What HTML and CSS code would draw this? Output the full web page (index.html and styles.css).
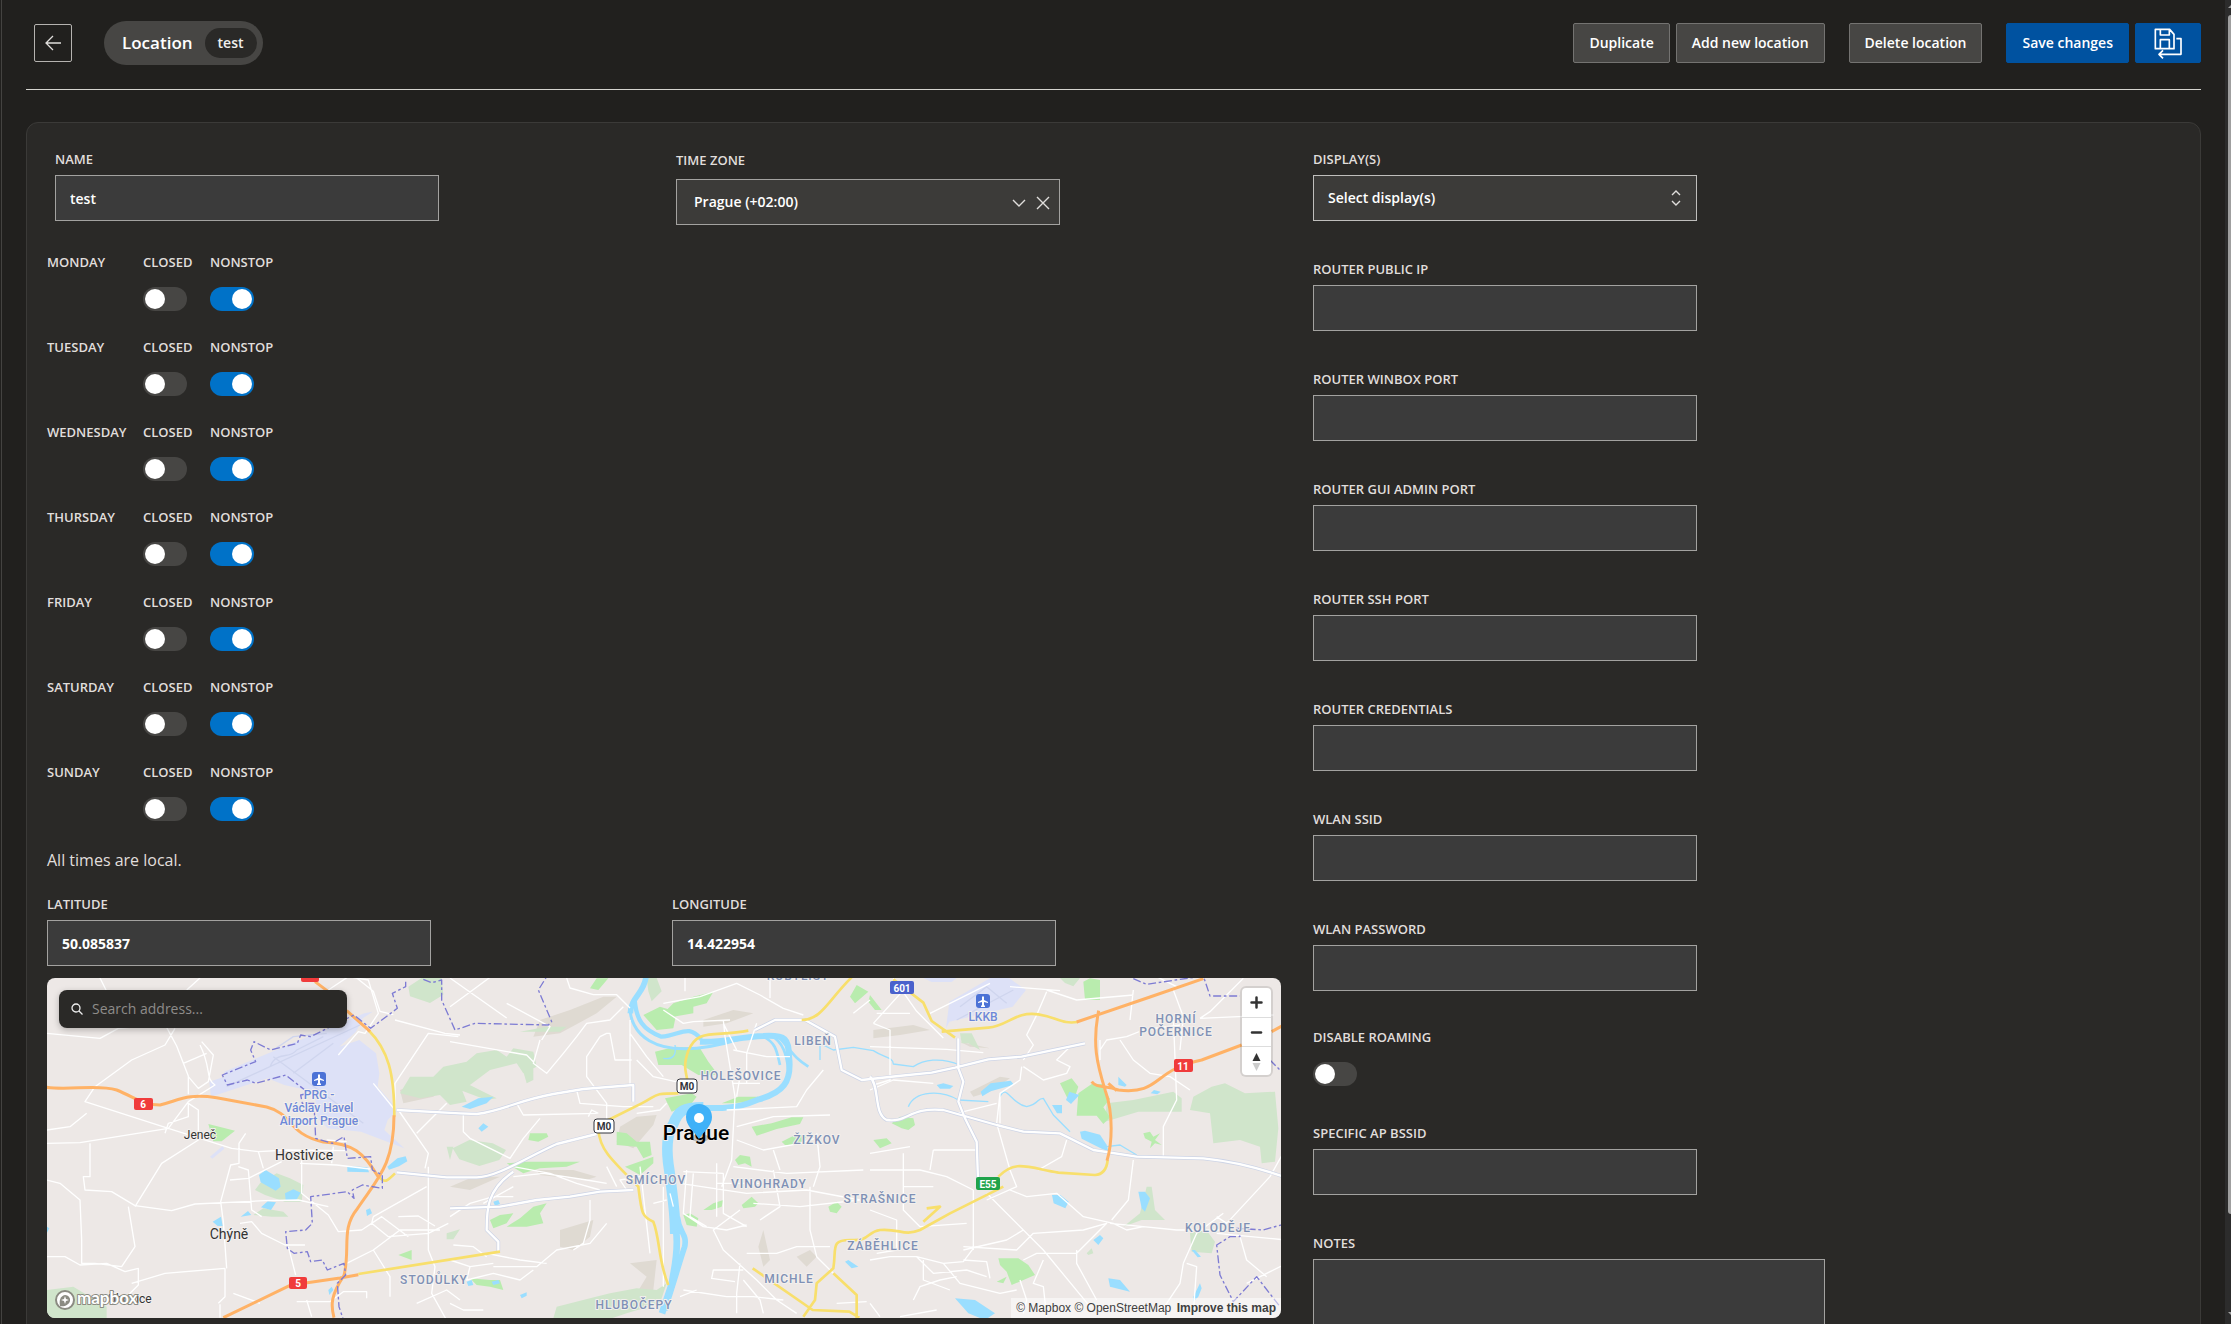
FILE: index.html
```html
<!DOCTYPE html>
<html lang="en">
<head>
<meta charset="utf-8">
<meta name="viewport" content="width=device-width, initial-scale=1">
<title>Location – test</title>
<link rel="stylesheet" href="styles.css">
</head>
<body>
<div class="shell">
<main class="main">
  <header class="header">
    <button class="back" type="button" aria-label="Back">
      <svg width="16" height="16" viewBox="0 0 16 16"><path d="M16 8H1M8 1L1 8l7 7" fill="none" stroke="currentColor" stroke-width="1.3"/></svg>
    </button>
    <h1 class="title">Location <span class="title-tag">test</span></h1>
    <div class="actions">
      <button class="btn" type="button">Duplicate</button>
      <button class="btn" type="button">Add new location</button>
      <button class="btn btn-spaced" type="button">Delete location</button>
      <button class="btn btn-primary btn-spaced" type="button">Save changes</button>
      <button class="btn btn-primary btn-icon" type="button" aria-label="Save and return">
        <svg width="28" height="31" viewBox="130 83 84 93" fill="none" stroke="currentColor" stroke-width="5" stroke-linejoin="round"><path d="M134 87H177L190 102V145H134ZM149 87V104H176V87M149 145V118H176V145M197 115H211V162H146M157 150L145 162L157 174"/></svg>
      </button>
    </div>
  </header>

  <form class="card">
    <div class="left">
      <div class="pair pair-inset">
        <div class="field">
          <label for="name">Name</label>
          <input class="control" id="name" type="text" value="test">
        </div>
        <div class="field field-zone">
          <label for="zone">Time zone</label>
          <div class="select-box">
            <select class="control" id="zone"><option>Prague (+02:00)</option></select>
            <svg class="zone-caret" width="14" height="8" viewBox="0 0 14 8"><path d="M1 1l6 6 6-6" fill="none" stroke="currentColor" stroke-width="1.4"/></svg>
            <button class="clear" type="button" aria-label="Clear time zone"><svg width="14" height="14" viewBox="0 0 14 14"><path d="M1 1l12 12M13 1L1 13" fill="none" stroke="currentColor" stroke-width="1.4"/></svg></button>
          </div>
        </div>
      </div>

      <div class="days">
        <div class="day"><span class="day-name">Monday</span><label>Closed<input class="toggle" type="checkbox"></label><label>Nonstop<input class="toggle" type="checkbox" checked></label></div>
        <div class="day"><span class="day-name">Tuesday</span><label>Closed<input class="toggle" type="checkbox"></label><label>Nonstop<input class="toggle" type="checkbox" checked></label></div>
        <div class="day"><span class="day-name">Wednesday</span><label>Closed<input class="toggle" type="checkbox"></label><label>Nonstop<input class="toggle" type="checkbox" checked></label></div>
        <div class="day"><span class="day-name">Thursday</span><label>Closed<input class="toggle" type="checkbox"></label><label>Nonstop<input class="toggle" type="checkbox" checked></label></div>
        <div class="day"><span class="day-name">Friday</span><label>Closed<input class="toggle" type="checkbox"></label><label>Nonstop<input class="toggle" type="checkbox" checked></label></div>
        <div class="day"><span class="day-name">Saturday</span><label>Closed<input class="toggle" type="checkbox"></label><label>Nonstop<input class="toggle" type="checkbox" checked></label></div>
        <div class="day"><span class="day-name">Sunday</span><label>Closed<input class="toggle" type="checkbox"></label><label>Nonstop<input class="toggle" type="checkbox" checked></label></div>
      </div>
      <p class="hint">All times are local.</p>

      <div class="pair">
        <div class="field">
          <label for="lat">Latitude</label>
          <input class="control coord" id="lat" type="text" value="50.085837">
        </div>
        <div class="field">
          <label for="lng">Longitude</label>
          <input class="control coord" id="lng" type="text" value="14.422954">
        </div>
      </div>

      <div class="map">
        <svg class="map-canvas" viewBox="0 0 1234 340" preserveAspectRatio="xMidYMid slice" role="img" aria-label="Map of Prague">
          <rect width="1234" height="340" fill="#ede8e6"/>
          <g transform="translate(-7 -8) scale(.333333)" fill="none" stroke-linejoin="round">
            <!-- hills -->
            <g fill="#dfdad2">
              <path d="M1230 300l60-25 80-20-10 30-130 50zM1500 150l90-30 100-40 40 0-60 50-110 60-80 10zM1740 470l50-30 60-5-10 30-60 70-50-20zM1490 600l110 0 70 20-30 10-140-15zM1560 780l100-30-10 50-50 40-40-10zM1770 880l80-10-10 90-50 10 30-50zM2170 780l20 90-20 20-15-60zM1990 150l90-30 60 10-80 30-70 10zM2500 180l120-15 50 15-90 15-80 10zM2790 365l90-45 30 5-60 40-50 15zM2760 215l90 20-60-5zM1080 360l130-50 50 0-80 70-90 20zM1230 650l70-30 80 0-90 40zM2270 860l40-20 20 20-30 30z"/>
            </g>
            <!-- woods -->
            <g fill="#d0e5cb">
              <path d="M1105 50l40-26 60 0 5 50-40 25-60-20zM1080 370l30-50 70 0 30-30 70-15 40 30-60 40 20 50-50 10-30-30-60 10zM1310 250l60-10 30 20 20-25 60 10 10 45-40 20-20-30-80 20-80 60-60-10 40-50zM1440 185l80-15 60 0-20 15zM1440 270l40 0 0 60-20 10zM1238 535l50-25 70 10 40 20-20 30-60 18-60-20zM1270 335l60 30 40 20-30 5-80-30zM1820 24l30 0 15 40-30 30-10-30zM660 640l50-30 40 15 40 20-5 50-50 0-60-20-30-15zM640 735l30-20 60 10 15 15-50 0zM20 960l80-10 100 60 0 40-180 0zM1550 1010l100-25 60-15 80-15 60 5 30-20-20 60-100 30-90 30-130-15zM1220 530l20 0-10 40zM1220 790l40-12-20 30-20 0zM3200 400l80-10 120-25 25 20 0 40-130 0-50 15-50 15zM3460 380l55-30 40-10 60 30 90-5 10 110-10 100-40 5-5-50-60-20-80 10-10-90-60-10zM3450 790l45-15 30 40-10 35-60-5zM3320 650l15 0 10 70 30 30-70 0-55 20 50-40zM2760 190l35 0 25 50-35-20-20 0zM3060 24l60 0-20 25-25-10zM3140 850l15-15 5 15-15 5z"/>
            </g>
            <!-- parks -->
            <g fill="#b9ecae">
              <path d="M505 462l80 20-40 32-25 0zM1075 855l40-15 0 30zM1650 55l20-30 35 0-30 35zM1810 135l50-25 50 15-10 50-50 5zM1900 100l60-20 60-15-20 35-40 10 0 20-60 10-20-20zM1845 245l60-15 75 5 25 40 30 40-60 0-50-30-70 0zM1875 385l80-15 15 10-15 20-60 25zM1730 485l30 5 30 25 40 0 5 40-25 10-20-35-60-5zM1755 590l85-30 0 20-40 35zM1470 490l50 0 5 10-30 15-30-5zM1400 580l60-5 160 0-40 15-80 5-50 15zM1350 750l30-15 40-5-20 30-40 15zM1440 745l40-35 40-10-20 30 10 30-50 10-60 0zM2135 470l60-10 60-18 35 0-10 20-70 15-60 20zM2225 515l40-20 40 0-30 30-40 0zM2085 570l15-15 30 5 5 30-20-10-20 5zM1990 720l30-20 30-10-5 20-30 10zM2105 705l30-25 20 20-10 10-35 5zM1930 735l20-5 25 15-5 25-30-5zM2365 710l25-15 15 15-15 20-20-5zM1290 925l60 5 30 0 10 30-40-10-40-5zM2045 400l50-20 60 0-20 15-60 5zM2430 80l20-35 35 20-40 35zM2490 75l35 45-20 0-20-25zM2555 460l25-20 40 5 5 20-20 15-20-5zM2500 510l40-5 15 15-35 15zM3060 340l35-15 20 25-10 30-20 10zM3115 370l40-28 30 0 25 45-20 25 20 30-20 20-20-25-60 0zM3130 35l20-10 30 5 0 60-45 0zM2875 865l60 0 30 20 20 30-70 30-15-40-20-20zM2870 935l30-15-10 20zM3310 490l20-5 10 15 20-10-15 20 20 15-20-5-15 15 5-20-20-10z"/>
            </g>
            <!-- airports -->
            <g fill="#dde1f7">
              <path d="M508 335l45-15 0-15 240-100 180-75 25-5-30 20-20 40-50 45 60-20 50 40 10 60-5 40 60 70-30 30-10 30 60 55-130-50-100-10-30-30-10-80-90-20-50-20-170 55zM2718 175l10-80 130-75 50 5 50 35-40 50-190 45zM510 560l38-32 5 8-36 30zM2650 24l100 0-15 12-60 0z"/>
            </g>
            <g stroke="#cfd5ee" stroke-width="4"><path d="M560 350L960 165M700 260L970 460M700 240l60-40 100-10M690 290c20-50 60-20 80-50l80-40M760 310l120-90M2750 150l170-90M2760 110l80-60 60 50"/></g>
            <!-- ponds -->
            <g fill="#9adeff">
              <path d="M657 615l20-15 40 25 5 25-15 12-45-25zM735 670l25-12 22 10-15 25-30-2zM663 712l20-18 25 3-15 23zM602 740l22-17 10 12zM518 755l25-15 5 28-15 0zM922 588l60 4 5 15-65-2zM1042 590l30-25 25-6 5 15-25 15-30 10zM978 720l12-5 6 15-15 8zM865 960l10-10 5 10-12 15zM20 770l8 5-8 15zM1265 410l50-25 45-5-20 20-50 17zM1315 475l15-15 15 10-20 15zM1360 695l15-5 5 12-15 5zM1440 975l20-8 0 10-15 8zM1280 935l15-5 5 15-15 3zM1355 935l20-5 5 10-20 5zM2415 875l10-5 30 20-20 5zM2822 365l30-25 60-8 10 12-70 20-25 15zM2690 345l20-5 30 8-10 8-30 0zM3120 485l15-3 45 12 20 30 5 20-20-8-60-30zM3036 405l30 0 0 25-15 0zM3078 390l10-25 30 10-25 27zM3235 320l25 25-5 5-20-5zM3332 370l10-10 20 5-10 8zM3295 665l20 0 15 20-15 40-10-10zM3036 675l25 0 25 20-10 20-35-15zM3160 810l20-15 10 10-15 20zM3205 925l35 5 30 35-60-15zM3460 980l20-40 5 15-10 25-15 15zM3455 840l10 0 18 20-10 2zM2745 985l60 5 60 40-30 20-50-20z"/>
            </g>
            <!-- streams -->
            <g stroke="#9adeff" stroke-width="4">
              <path d="M2340 270v-50l40 20 60-8 60 10c30 20 60 20 60 40l60 8c30-20 80-30 140-5M2605 410c20-50 100-50 150-20l90 5M2880 380c20-40 30 20 80 30 40-10 30-25 50-25l30 50 50 50M3200 530l40-5 50 30M1870 265c30 5 40-10 35-40"/>
            </g>
            <!-- Vltava -->
            <g stroke="#9adeff">
              <path d="M1818 20c-5 50-45 60-47 110" stroke-width="17"/>
              <path d="M1771 125c2 35 40 170 330 82" stroke-width="9"/>
              <path d="M1784 90c5 60 25 90 80 110 60-5 80-40 120 8" stroke-width="13"/>
              <path d="M1980 215c60 5 120-15 190-17 70-4 75 10 77 60 10 80-20 110-90 130-50 20-60 22-110 26l-60 0" stroke-width="18"/>
              <path d="M2170 200c40 20 40 45 50 85M2190 195c40 20 50 60 55 105M2215 200c45 50 45 60 90 90" stroke-width="8"/>
              <path d="M1990 412c-60 0-75 10-90 50-20 30-22 80-12 140 7 60 18 120 18 190" stroke-width="32"/>
              <path d="M1908 780c10 70-10 130-12 160l-30 90" stroke-width="20"/>
              <path d="M1912 740c5 50 30 50 22 90-20 60-30 100-60 190" stroke-width="17"/>
            </g>
            <!-- minor roads -->
            <g stroke="#fff" stroke-width="4">
              <path d="M20 190l160 15 55-30 140-12 35 65 35 90v55M165 350l110-80 100-45 30-50M165 350l-30 45 250 80 60-80 80-50c-30-20-10-50-45-120M180 24l30 60M440 60l40-36M445 320l30 35 30-20 15-80-35-40M430 280l70-30M385 475L120 518 20 520M150 520v100h-20l5 40 80 5 70 42 110 15 70-20 210-10 100-2 90 20M285 710l80-130 110-70 0-90-30-20 0 40-60 20-10 30M20 630l40 10 60 50 5 120 0 70 40 0 80 10 40-60-20-120M20 480l70-10 50-40M20 860l55 0 45 25 80-5 55 25 40-10 0 50-30 30M275 940l100-30 180-15M560 895l-10-140-8-60 30-110 25-5 0-60 20-30M385 475l190 60 80 10 90-5 170 2M655 545l15 50M570 630l55-5 100-50M595 590l30 10 10 120 30 20M660 1000l-80-30M745 830l22 85M540 1043l0-40M555 895v85l-20 20M600 760l35-5 30 35 70 35 60 0M785 560v110l80 65 30 50 70-5 60-40 80 60M780 580l110 5 100 12M860 510l60 5M875 580l5-50M1000 340l65 80 0-80 100-150 90 10M1065 150l150 40 45 5M865 60l60-40 60 10 30 100-40 60-20-5-60 70M950 24l50 40 20 60 40 10M1075 420l90 130-10 45M1130 490l90-90M1165 590v250l20 50-10 80 50 90M1000 840l80-60 40 0 80 0M1000 740l-5 20 50 40 120-10 60-30M1000 840l50 80 0 60M800 990l15 50M770 995l100 0 40-30 70 0 0 20M1130 1000l90-40 40 30M920 880l80-40M1000 740l160-90M1075 740l60-2 50 30"/>
              <path d="M1230 110l120-88M1230 24l170 120M1400 100l130 70-25 40M1580 24l10 30 70 20 70 0 40 40M1500 210l-20 70 40 30 50-60 40-50 30-40 70-10 40-40M1230 215l230 40 20 20M1770 150l0 130 0 70M1680 200l20-10 10 0 15 80 50 0M1680 200l-40 60 0 60 60 80 0 50M1610 360l10 40 130 10 90 0M1430 400l20 35 220-5M1270 430v55l20 20 120 60 40-60 50-60M1790 430l70-10 20-20M1675 430l-20-10-10 20M1790 270l50 50 90 20M1770 190l50 70 50 60M1870 120l60 40 30-5 110-5M1870 100l110-20 110-40 70 35 70 40 60 20M1935 24v40M2190 24l0 60M2050 150l5 50 30 180-10 190-30 80M2050 160l40 80M2150 160l-30 90 0 90M2080 240l100 20 70 0M2080 340l80 0M2060 420l210-10 30-50 50-60M2100 320l-10 60M2090 510l80 30 110-20 60-20M2090 470l110-30 170-5M2200 540l20 60M2330 490l10 100-20 60M2080 590l160 20 230-10M1930 605l120 5M1920 640l200 30 180-10 160 30M1940 600l-10 130 60 40 70 10 60-15M1960 610l-10 130 50 30M2030 580v160M2050 610v120l70 40M2030 640l130 0M2100 720l-80 60 30 60 100 90 60 60 60 40M2200 600l20 110-60 40M2140 700l140 10 180-20M2310 650l0 130 20 80 50 50M2120 850l90 0M2210 850l60-20 100 0M2110 900l-90 0-5 25 70 10M2100 880l-10 90 0 60M1930 960l130 20 80 0 90 10M2110 930l50 60 10 40M1800 590l30 260M1840 700l40-10M1800 620l-60 10 20 30M1870 650v300M1890 670l10 40M1700 590l30 60M1700 640l-60-10-130-20-90 10M1420 590l110 20 80 30 70 20M1700 760l-50 60-100 20-60 50-130 0M1650 690l0 60-20 70-30 20M1340 860l-40-30-60-5M1340 850l100 20 80 10M1230 870l60 20 70-10M1290 890l-10 40 80-20 80 20 40-30M1230 1000l40 20 60 0M1230 740l60-40 70-20 60 0M1330 700l90-50M1920 980l50-20M2440 130l50-40M2390 1000l90-5"/>
              <path d="M2490 230l230 8 110 10M2550 240v-60l-50-20M2550 240v90l-50 15M2490 360l70-30 120 10M2950 290l60 40 70-20 10-20-40-20 40-40M2945 290l-5 40-60 40-10 90 40 140 20 50-90 40M2950 270l30-45-20-30 30-60 30-70M2880 460v-90M2870 400l-120 30M3020 60l90 30 170-15M2910 50l150 12M3400 140l10 250-40 80 0 90M3410 50l-60-30M3240 210l40 60 50 40 60 10 60 40M3180 240l20-30 60-10 50-20 110-15M3280 60l-10 90M3180 210v60M3400 60l30 80-10 100M3480 145l220-10M3480 145l30-20 100-100M3080 510l-15 50-70 40M3280 570l-15 120-50 60M2840 670l170 170 140 170M2800 660l0 180M2910 660l50 20 90-10 80 70 90 20 40 20 50-10 100 10 140 0M2770 830l160 10 50-50 150-10 70-20-90 90-120 0-40 20M3110 840v40l60 110M3210 760l100 10M3430 880l40-90 80-60M3430 880l-10 60-60 90M3440 880l30 10-10 140M3530 740l30 20 130-140 50-90M3600 800l20 70 60 50M3530 790l210 20M3620 940l120-60M2590 550v170l50 50 140-10M2490 550l120-20M2680 540l-10 60M2680 540l130 0M2490 600l150 0 80 20 80 40M2590 650l90 0M2490 720l80 30 0 90-60 10M2490 870l60-10 80 0 80 20 60-5 30-40 0-120M2630 860l50 50 100-10 60 20M2710 880l50 60 120 30 50-10M2770 870l70 5 10 50M2620 990l20-40 60-20 50-10M2490 1000l30 40M2580 1040l110-20M2560 24l70 100 80 80M2510 130l100 0M2500 160l100-110M2670 130l180-90M2950 780l-50 30-130 30M3010 870l-30 70 30 10 10 90M2940 930l20 60-10 40M2650 870v60l80 30"/>
            </g>
            <!-- main streets -->
            <g stroke="#cdd4e6" stroke-width="11">
              <path id="a" d="M1070 420l190 10 50 2c80-10 120-40 230-60l90-15 150-12v50M1070 607l150 15 90 0c60 0 150-60 240-100l120-30M1230 715l150-5 110-20 100-10 90-15 100-5M1375 845v-30l-35-35c0-60 0-120 80-175"/>
              <path id="b" d="M2145 180l60-30 90 0 90 50 20 100 60 30 110-12 100-10 70-15 100-25 100-8 190-40M2755 205v90l15 40-15 60 20 50 35 70 5 140M2490 320c30 30 10 110 50 130 60 10 70-40 170-30l160 45 80 20 110 5 100 50 130 20 200 5c100 10 170 30 240 55"/>
            </g>
            <g stroke="#fff" stroke-width="7"><use href="#a"/><use href="#b"/></g>
            <!-- yellow roads -->
            <g stroke="#f8df6c" stroke-width="8">
              <path d="M985 180c60 60 78 130 78 260M955 912l425-67M1015 620c20 20 25 15 50-10M2125 182c-100 20-150-10-180 60-15 40-10 60 0 100M1915 370c-80 0-60 5-110 30l-100 50-30 30c5 60 40 90 120 170 10 80 10 90 45 105 20 50 15 120 45 190M2285 150c60 0 80-60 150-128M2138 895l180 125 110 5 30 18M2290 1040l35-50 5-50 50-45c10-60-10-85 50-85 60 5 50-25 90-30 60-5 70 20 120 0l90-50 160-80M2650 755l50-45-40 5M2380 910l70 65 0 70M2560 28l90 70 25 55 70 50M2705 185l140-12c60-5 80-50 150-40 60 10 70 30 118 23M2875 620c50-50 80-30 180-12l110 7c30-2 36-25 38-45"/>
            </g>
            <!-- motorways -->
            <g stroke="#ffb266" stroke-width="9">
              <path d="M20 352c70 10 150-10 210 8 60 25 80 45 130 45 60-15 80-35 170-22l150 28c80 20 60 80 170 105 90 5 120 30 165 105M825 35l40 30M920 122l70 62M1062 436c0 150-50 190-110 280-50 60-20 120-40 200-40 60-40 90-30 127M550 1043l200-97 150-22 55-10M3110 156l220-75 160-55M3176 122c-20 100-5 160 20 240 25 70 20 160 5 210M3155 335c15 20 40 10 80 25 130 15 100-60 250-90l120-45M3695 185l40-22M3205 340l25 22"/>
            </g>
            <!-- municipal boundaries -->
            <g stroke="#7d7bd3" stroke-width="4" stroke-dasharray="24 8 8 8">
              <path d="M1097 35v15l-40 20 15 45-80 60-50-40-60 30-70 35-30-5-10 25-80 20-50-25-10 25 15 35-100 40 15 30 60-15 25 10 90-25 70 55-25 5 5 25 35 0 5 105 50 15 35-20 10 65 70-5 5 40 30 15 0 40-60-10-30 15 5 25-20-20-110 15 5 80-20 20-60 5 5 50 20 15 40-5 10 30 35-5 15 30 50-20 5 35-25 25 5 70 20 60M1150 28l25 10 30-8 0 60 40 90 60-20 220 5 10-10-40-95 25-40M3280 26l40 17 100-15 70-10 20 60 90 0M3690 270l50 50M3740 760l-70 20-80-5 10 25-30 0-40 25 10 90 40 80 70-75 70 90"/>
            </g>
          </g>
          <!-- road shields -->
          <g class="shield">
            <rect x="254" y="-7" width="18" height="11" rx="2" fill="#f03b3b"/>
            <rect x="87" y="120" width="19" height="12" rx="2" fill="#f03b3b"/><text x="96" y="130">6</text>
            <rect x="242" y="299" width="18" height="12" rx="2" fill="#f03b3b"/><text x="251" y="309">5</text>
            <rect x="1127" y="81" width="19" height="13" rx="2" fill="#f03b3b"/><text x="1136" y="92">11</text>
            <rect x="843" y="3" width="24" height="13" rx="2" fill="#4a61cc"/><text x="855" y="14">601</text>
            <rect x="929" y="199" width="24" height="13" rx="2" fill="#20a34b"/><text x="941" y="210">E55</text>
            <g class="shield-light"><rect x="630" y="101" width="20" height="14" rx="3"/><text x="640" y="112">M0</text><rect x="547" y="141" width="20" height="14" rx="3"/><text x="557" y="152">M0</text></g>
          </g>
          <!-- airport markers -->
          <g id="plane"><rect x="265" y="94" width="14" height="14" rx="3" fill="#4c72d6"/><path d="M272 96l1 1v3l4 2v1l-4-1v3l1 1v1h-4v-1l1-1v-3l-4 1v-1l4-2v-3z" fill="#fff"/></g>
          <use href="#plane" x="664" y="-78"/>
          <g class="poi"><text x="272" y="121">PRG -</text><text x="272" y="134">Václav Havel</text><text x="272" y="147">Airport Prague</text><text x="936" y="43">LKKB</text></g>
          <g class="district">
            <text x="751" y="2">KOBYLISY</text><text x="766" y="67">LIBEŇ</text><text x="694" y="102">HOLEŠOVICE</text><text x="770" y="166">ŽIŽKOV</text><text x="609" y="206">SMÍCHOV</text><text x="722" y="210">VINOHRADY</text><text x="833" y="225">STRAŠNICE</text><text x="836" y="272">ZÁBĚHLICE</text><text x="742" y="305">MICHLE</text><text x="587" y="331">HLUBOČEPY</text><text x="387" y="306">STODŮLKY</text><text x="1129" y="45">HORNÍ</text><text x="1129" y="58">POČERNICE</text><text x="1171" y="254">KOLODĚJE</text>
          </g>
          <g class="town"><text x="153" y="161" font-size="12">Jeneč</text><text x="257" y="182" font-size="14">Hostivice</text><text x="182" y="261" font-size="14">Chýně</text><text x="83" y="325" font-size="12">Úhonice</text><text x="649" y="162" font-size="21" font-weight="500" fill="#000">Prague</text></g>
          <!-- pin -->
          <ellipse cx="653" cy="160" rx="9" ry="4" fill="#000" fill-opacity=".2"/>
          <path d="M652 126a13 13 0 0 1 13 13c0 9-8 14-13 22c-5-8-13-13-13-22a13 13 0 0 1 13-13z" fill="#3fb1f8"/><circle cx="652" cy="140" r="5" fill="#fff"/>
          <!-- brand mark -->
          <circle cx="18" cy="322" r="9" fill="#fff" stroke="#8b8b82" stroke-width="2"/><path d="M13 328c-1-5 0-10 5-11a5 5 0 0 1 5 6c-1 4-6 6-10 5z" fill="#8b8b82"/><path d="M18 318l1 3 3 1-3 1-1 3-1-3-3-1 3-1z" fill="#fff"/>
          <text class="brand" x="30" y="326">mapbox</text>
        </svg>
        <label class="search"><svg width="12" height="12" viewBox="0 0 12 12"><path d="M8 8l3.500 3.500M9 5a4 4 0 1 1-8 0a4 4 0 0 1 8 0z" fill="none" stroke="#eee" stroke-width="1.300"/></svg><input type="text" placeholder="Search address..." aria-label="Search address"></label>
        <div class="zoom">
          <button type="button" aria-label="Zoom in"><svg width="29" height="29" viewBox="0 0 29 29"><path d="M14.500 9.500v10M9.500 14.500h10" stroke="#333" stroke-width="2.500" stroke-linecap="round"/></svg></button>
          <button type="button" aria-label="Zoom out"><svg width="29" height="29" viewBox="0 0 29 29"><path d="M10 14.500h9" stroke="#333" stroke-width="2.500" stroke-linecap="round"/></svg></button>
          <button type="button" aria-label="Reset north"><svg width="29" height="29" viewBox="0 0 29 29"><path d="M10.500 14l4-8 4 8z" fill="#333"/><path d="M10.500 16l4 8 4-8z" fill="#ccc"/></svg></button>
        </div>
        <div class="credit"><a href="#">© Mapbox</a> <a href="#">© OpenStreetMap</a> <a class="improve" href="#">Improve this map</a></div>
      </div>
    </div>

    <div class="right">
      <div class="field">
        <label for="displays">Display(s)</label>
        <div class="select-box">
          <select class="control select-light" id="displays"><option>Select display(s)</option></select>
          <svg class="updown" width="10" height="16" viewBox="0 0 10 16"><path d="M1 5l4-4 4 4M1 11l4 4 4-4" fill="none" stroke="currentColor" stroke-width="1.4"/></svg>
        </div>
      </div>
      <div class="field"><label for="ip">Router public IP</label><input class="control" id="ip" type="text"></div>
      <div class="field"><label for="winbox">Router Winbox port</label><input class="control" id="winbox" type="text"></div>
      <div class="field"><label for="gui">Router GUI admin port</label><input class="control" id="gui" type="text"></div>
      <div class="field"><label for="ssh">Router SSH port</label><input class="control" id="ssh" type="text"></div>
      <div class="field"><label for="cred">Router credentials</label><input class="control" id="cred" type="text"></div>
      <div class="field"><label for="ssid">WLAN SSID</label><input class="control" id="ssid" type="text"></div>
      <div class="field"><label for="wpass">WLAN password</label><input class="control" id="wpass" type="text"></div>
      <div class="field field-toggle"><label for="roam">Disable roaming</label><input class="toggle" id="roam" type="checkbox"></div>
      <div class="field"><label for="bssid">Specific AP BSSID</label><input class="control" id="bssid" type="text"></div>
      <div class="field"><label for="notes">Notes</label><textarea class="control notes" id="notes"></textarea></div>
    </div>
  </form>
</main>
<div class="scrollbar" aria-hidden="true"><i class="arrow-up"></i><div class="thumb"></div><i class="arrow-down"></i></div>
</div>
</body>
</html>
```
FILE: styles.css
```css
* { box-sizing: border-box; }
body {
  margin: 0;
  background: #21201e;
  color: #e0dedc;
  font: 14px/20px "Open Sans", "Noto Sans", sans-serif;
}
button, input, select, textarea { font: inherit; color: inherit; margin: 0; }
button { cursor: pointer; }

.shell {
  display: flex;
  height: 100vh;
  overflow: hidden;
  border-left: 1px solid #21201e;
}
.main {
  flex: 1;
  min-width: 0;
  padding: 0 24px;
  border-left: 1px solid #444341;
}

/* header */
.header {
  display: flex;
  align-items: center;
  padding: 21px 0 24px 8px;
  border-bottom: 1px solid #d5d4cf;
}
.back {
  display: grid;
  place-items: center;
  width: 38px;
  height: 38px;
  padding: 0;
  background: none;
  border: 1px solid #b5b3b0;
  border-radius: 2px;
}
.title {
  display: flex;
  align-items: center;
  gap: 12px;
  height: 44px;
  margin: 0 0 0 32px;
  padding: 0 6px 0 18px;
  border-radius: 22px;
  background: #474644;
  color: #fff;
  font-size: 17px;
  font-weight: 600;
}
.title-tag {
  padding: 5px 13px;
  border-radius: 15px;
  background: #2a2927;
  color: #f0efed;
  font-size: 14px;
}
.actions { display: flex; gap: 6px; margin-left: auto; }
.btn {
  height: 40px;
  padding: 0 15px;
  border: 1px solid #747371;
  border-radius: 2px;
  background: #474644;
  color: #fff;
  font-size: 14px;
  font-weight: 600;
}
.btn-spaced { margin-left: 18px; }
.btn-primary { background: #0052a0; border-color: #0052a0; }
.btn-icon { display: grid; place-items: center; width: 66px; }

/* card */
.card {
  display: grid;
  grid-template-columns: minmax(0, 1234fr) minmax(0, 868fr);
  gap: 32px;
  margin-top: 32px;
  padding: 26px 19px 60px 20px;
  border: 1px solid #3b3a38;
  border-radius: 12px;
  background: #2a2927;
}
.pair { display: grid; grid-template-columns: 1fr 1fr; gap: 16px; }
.pair-inset { gap: 24px; padding: 0 8px; }
label, .day-name {
  display: block;
  font-size: 13px;
  font-weight: 600;
  line-height: 20px;
  text-transform: uppercase;
}
.field > label { margin-bottom: 6px; }
.field-zone > label { line-height: 22px; margin-bottom: 8px; }
.control {
  display: block;
  width: 384px;
  max-width: 100%;
  height: 46px;
  padding: 0 14px;
  border: 1px solid #a3a2a0;
  border-radius: 0;
  background: #3b3b3b;
  color: #fff;
  font-size: 14px;
  font-weight: 600;
  appearance: none;
}
.coord { font-weight: 700; }
.select-box { position: relative; width: 384px; max-width: 100%; }
select.control { background: #3c3b39; }
.select-light { border-color: #bfbebc; }
.field-zone .control { padding-left: 17px; }
.zone-caret { position: absolute; right: 34px; top: 20px; }
.clear {
  position: absolute;
  right: 5px;
  top: 12px;
  display: grid;
  place-items: center;
  width: 24px;
  height: 24px;
  padding: 0;
  border: 0;
  background: none;
}
.updown { position: absolute; right: 16px; top: 15px; }

.days { display: grid; gap: 26px; margin-top: 27px; }
.day { display: grid; grid-template-columns: 96px 67px auto; justify-content: start; }
.toggle {
  display: block;
  width: 44px;
  height: 24px;
  margin-top: 15px;
  padding: 2px;
  border-radius: 12px;
  background: #474644;
  appearance: none;
}
.toggle::before {
  content: "";
  display: block;
  width: 20px;
  height: 20px;
  border-radius: 50%;
  background: #fff;
}
.toggle:checked { background: #0072c8; }
.toggle:checked::before { margin-left: auto; }
.hint { margin: 27px 0 22px; font-size: 16px; line-height: 24px; }

.right { display: grid; gap: 38px; align-content: start; }
.field-toggle { margin: -2px 0 -1px; }
.notes { width: 512px; height: 120px; padding: 12px 14px; resize: none; }

/* map */
.map {
  position: relative;
  height: 340px;
  margin-top: 12px;
  border-radius: 8px;
  overflow: hidden;
  font-family: Roboto, sans-serif;
}
.map-canvas { display: block; width: 100%; height: 100%; }
.map-canvas text { text-anchor: middle; paint-order: stroke; stroke: #f3f0ee; stroke-width: 2px; stroke-linejoin: round; }
.map-canvas .shield text { fill: #fff; stroke: none; font-size: 10px; font-weight: 700; }
.map-canvas .shield-light rect { fill: #fff; stroke: #33343c; stroke-width: 1px; }
.map-canvas .shield-light text { fill: #33343c; }
.poi { fill: #6d88d8; font-size: 12px; font-weight: 500; }
.district { fill: #7f90b5; font-size: 12px; font-weight: 500; letter-spacing: 1px; }
.town { fill: #333; }
.map-canvas .brand {
  fill: #fff;
  stroke: #8b8b82;
  text-anchor: start;
  font: 700 17px Lato, sans-serif;
}
.search {
  position: absolute;
  left: 12px;
  top: 12px;
  display: flex;
  align-items: center;
  gap: 9px;
  width: 288px;
  height: 38px;
  padding: 0 12px;
  border-radius: 8px;
  background: #2a2927;
  box-shadow: 0 2px 6px rgba(0, 0, 0, .25);
  text-transform: none;
}
.search input {
  flex: 1;
  min-width: 0;
  padding: 0;
  border: 0;
  outline: 0;
  background: none;
  font: 500 14px/20px "Open Sans", sans-serif;
}
.search input::placeholder { color: #8e8c8a; opacity: 1; }
.zoom {
  position: absolute;
  right: 10px;
  top: 10px;
  width: 29px;
  border-radius: 4px;
  background: #fff;
  box-shadow: 0 0 0 2px rgba(0, 0, 0, .1);
}
.zoom button { display: block; width: 29px; height: 29px; padding: 0; border: 0; background: none; }
.zoom button + button { border-top: 1px solid #ddd; }
.zoom svg { display: block; }
.credit {
  position: absolute;
  right: 0;
  bottom: 0;
  padding: 0 5px;
  background: rgba(255, 255, 255, .5);
  font: 12px/20px "Liberation Sans", Arial, sans-serif;
}
.credit a { color: #404040; text-decoration: none; }
.credit .improve { margin-left: 2px; font-weight: 700; }

/* scrollbar */
.scrollbar {
  display: flex;
  flex-direction: column;
  align-items: flex-end;
  width: 6px;
  padding: 5px 0 9px;
  overflow: hidden;
  background: #2c2c2c;
}
.thumb { width: 3px; flex: 1; margin: 7px 0 98px; border-radius: 3px 0 0 3px; background: #9f9f9f; }
.arrow-up, .arrow-down { width: 3px; height: 3px; background: #9f9f9f; }
.arrow-up { clip-path: polygon(100% 0, 100% 100%, 0 100%); }
.arrow-down { clip-path: polygon(0 0, 100% 0, 100% 100%); }
```
